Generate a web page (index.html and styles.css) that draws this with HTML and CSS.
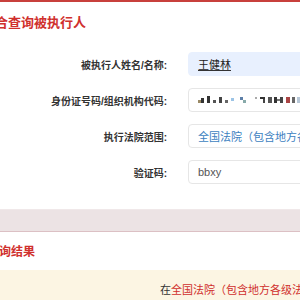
FILE: index.html
```html
<!DOCTYPE html>
<html lang="zh-CN">
<head>
  <meta charset="UTF-8" />
  <title>综合查询被执行人</title>
  <link rel="stylesheet" href="styles.css">
</head>
<body>
  <div class="topbar"></div>
  <div class="page">
    <h2 class="panel-title">综合查询被执行人</h2>

    <form class="search-form">
      <label class="field-label">被执行人姓名/名称:</label>
      <div class="field autofill"><span class="ime">王健林</span></div>

      <label class="field-label">身份证号码/组织机构代码:</label>
      <div class="field">
        <svg class="mosaic" width="110" height="10" viewBox="0 0 110 10">
          <rect x="0" y="5" width="3" height="3" fill="#9a8a66"/>
          <rect x="3" y="3" width="3" height="5" fill="#333"/>
          <rect x="9" y="1" width="3" height="7" fill="#333"/>
          <rect x="15" y="5" width="3" height="3" fill="#555"/>
          <rect x="21" y="2" width="3" height="6" fill="#444"/>
          <rect x="27" y="5" width="3" height="3" fill="#666"/>
          <rect x="33" y="3" width="3" height="3" fill="#9cc4e6"/>
          <rect x="42" y="2" width="3" height="3" fill="#5d7fa8"/>
          <rect x="45" y="5" width="3" height="3" fill="#8aa"/>
          <rect x="57" y="2" width="2" height="2" fill="#aaa"/>
          <rect x="62" y="2" width="5" height="2" fill="#333"/>
          <rect x="65" y="4" width="2" height="4" fill="#444"/>
          <rect x="70" y="2" width="4" height="6" fill="#555"/>
          <rect x="76" y="2" width="3" height="6" fill="#333"/>
          <rect x="79" y="4" width="3" height="2" fill="#777"/>
          <rect x="82" y="2" width="3" height="6" fill="#444"/>
          <rect x="88" y="2" width="4" height="6" fill="#a44"/>
          <rect x="94" y="2" width="3" height="6" fill="#666"/>
          <rect x="99" y="2" width="4" height="6" fill="#b8c8d8"/>
        </svg>
      </div>

      <label class="field-label">执行法院范围:</label>
      <div class="field court">全国法院（包含地方各级法院）</div>

      <label class="field-label">验证码:</label>
      <div class="field">bbxy</div>
    </form>
  </div>

  <div class="band"></div>

  <div class="page">
    <h2 class="result-title">查询结果</h2>
  </div>
  <div class="notice">
    <span class="notice-text">在<em>全国法院（包含地方各级法院）范围内没有找到</em></span>
  </div>
</body>
</html>
```

FILE: styles.css
```css
html, body {
  margin: 0;
  padding: 0;
  height: 100%;
  overflow: hidden;
  background: #fff;
  font-family: "Liberation Sans", "Noto Sans CJK SC", sans-serif;
}

.topbar {
  height: 2px;
  background: #c8403c;
}

.page {
  margin-left: -18px;
  width: 420px;
}

.panel-title {
  margin: 0;
  padding-top: 12px;
  font-size: 13px;
  line-height: 18px;
  font-weight: bold;
  color: #d0302d;
}

.search-form {
  display: grid;
  grid-template-columns: 185px 1fr;
  column-gap: 21px;
  row-gap: 12px;
  padding-top: 20px;
  align-items: center;
}

.field-label {
  text-align: right;
  font-size: 10px;
  font-weight: bold;
  color: #333;
}

.field {
  height: 24px;
  box-sizing: border-box;
  border: 1px solid #e6e6e6;
  border-radius: 4px;
  padding: 0 9px;
  display: flex;
  align-items: center;
  font-size: 11px;
  color: #555;
  background: #fff;
}

.field.autofill {
  background: #e8f0fe;
  border-color: #e8f0fe;
  color: #222;
}

.ime {
  text-decoration: underline;
  text-decoration-color: #333;
}

.field.court {
  color: #3d7fbf;
}

.mosaic {
  display: block;
}

.band {
  margin-top: 25px;
  height: 21px;
  background: #ece3e4;
  border-top: 1px solid #f0e8e9;
  border-bottom: 1px solid #dcc0c4;
}

.result-title {
  margin: 0;
  padding: 13px 0 0 5px;
  height: 25px;
  font-size: 12px;
  line-height: 14px;
  font-weight: bold;
  color: #d0302d;
}

.notice {
  background: #fcf5e3;
  height: 40px;
  padding: 10px 0 0 160px;
  box-sizing: border-box;
  white-space: nowrap;
}

.notice-text {
  font-size: 11px;
  line-height: 14px;
  color: #333;
}

.notice-text em {
  font-style: normal;
  color: #d0302d;
}
```
